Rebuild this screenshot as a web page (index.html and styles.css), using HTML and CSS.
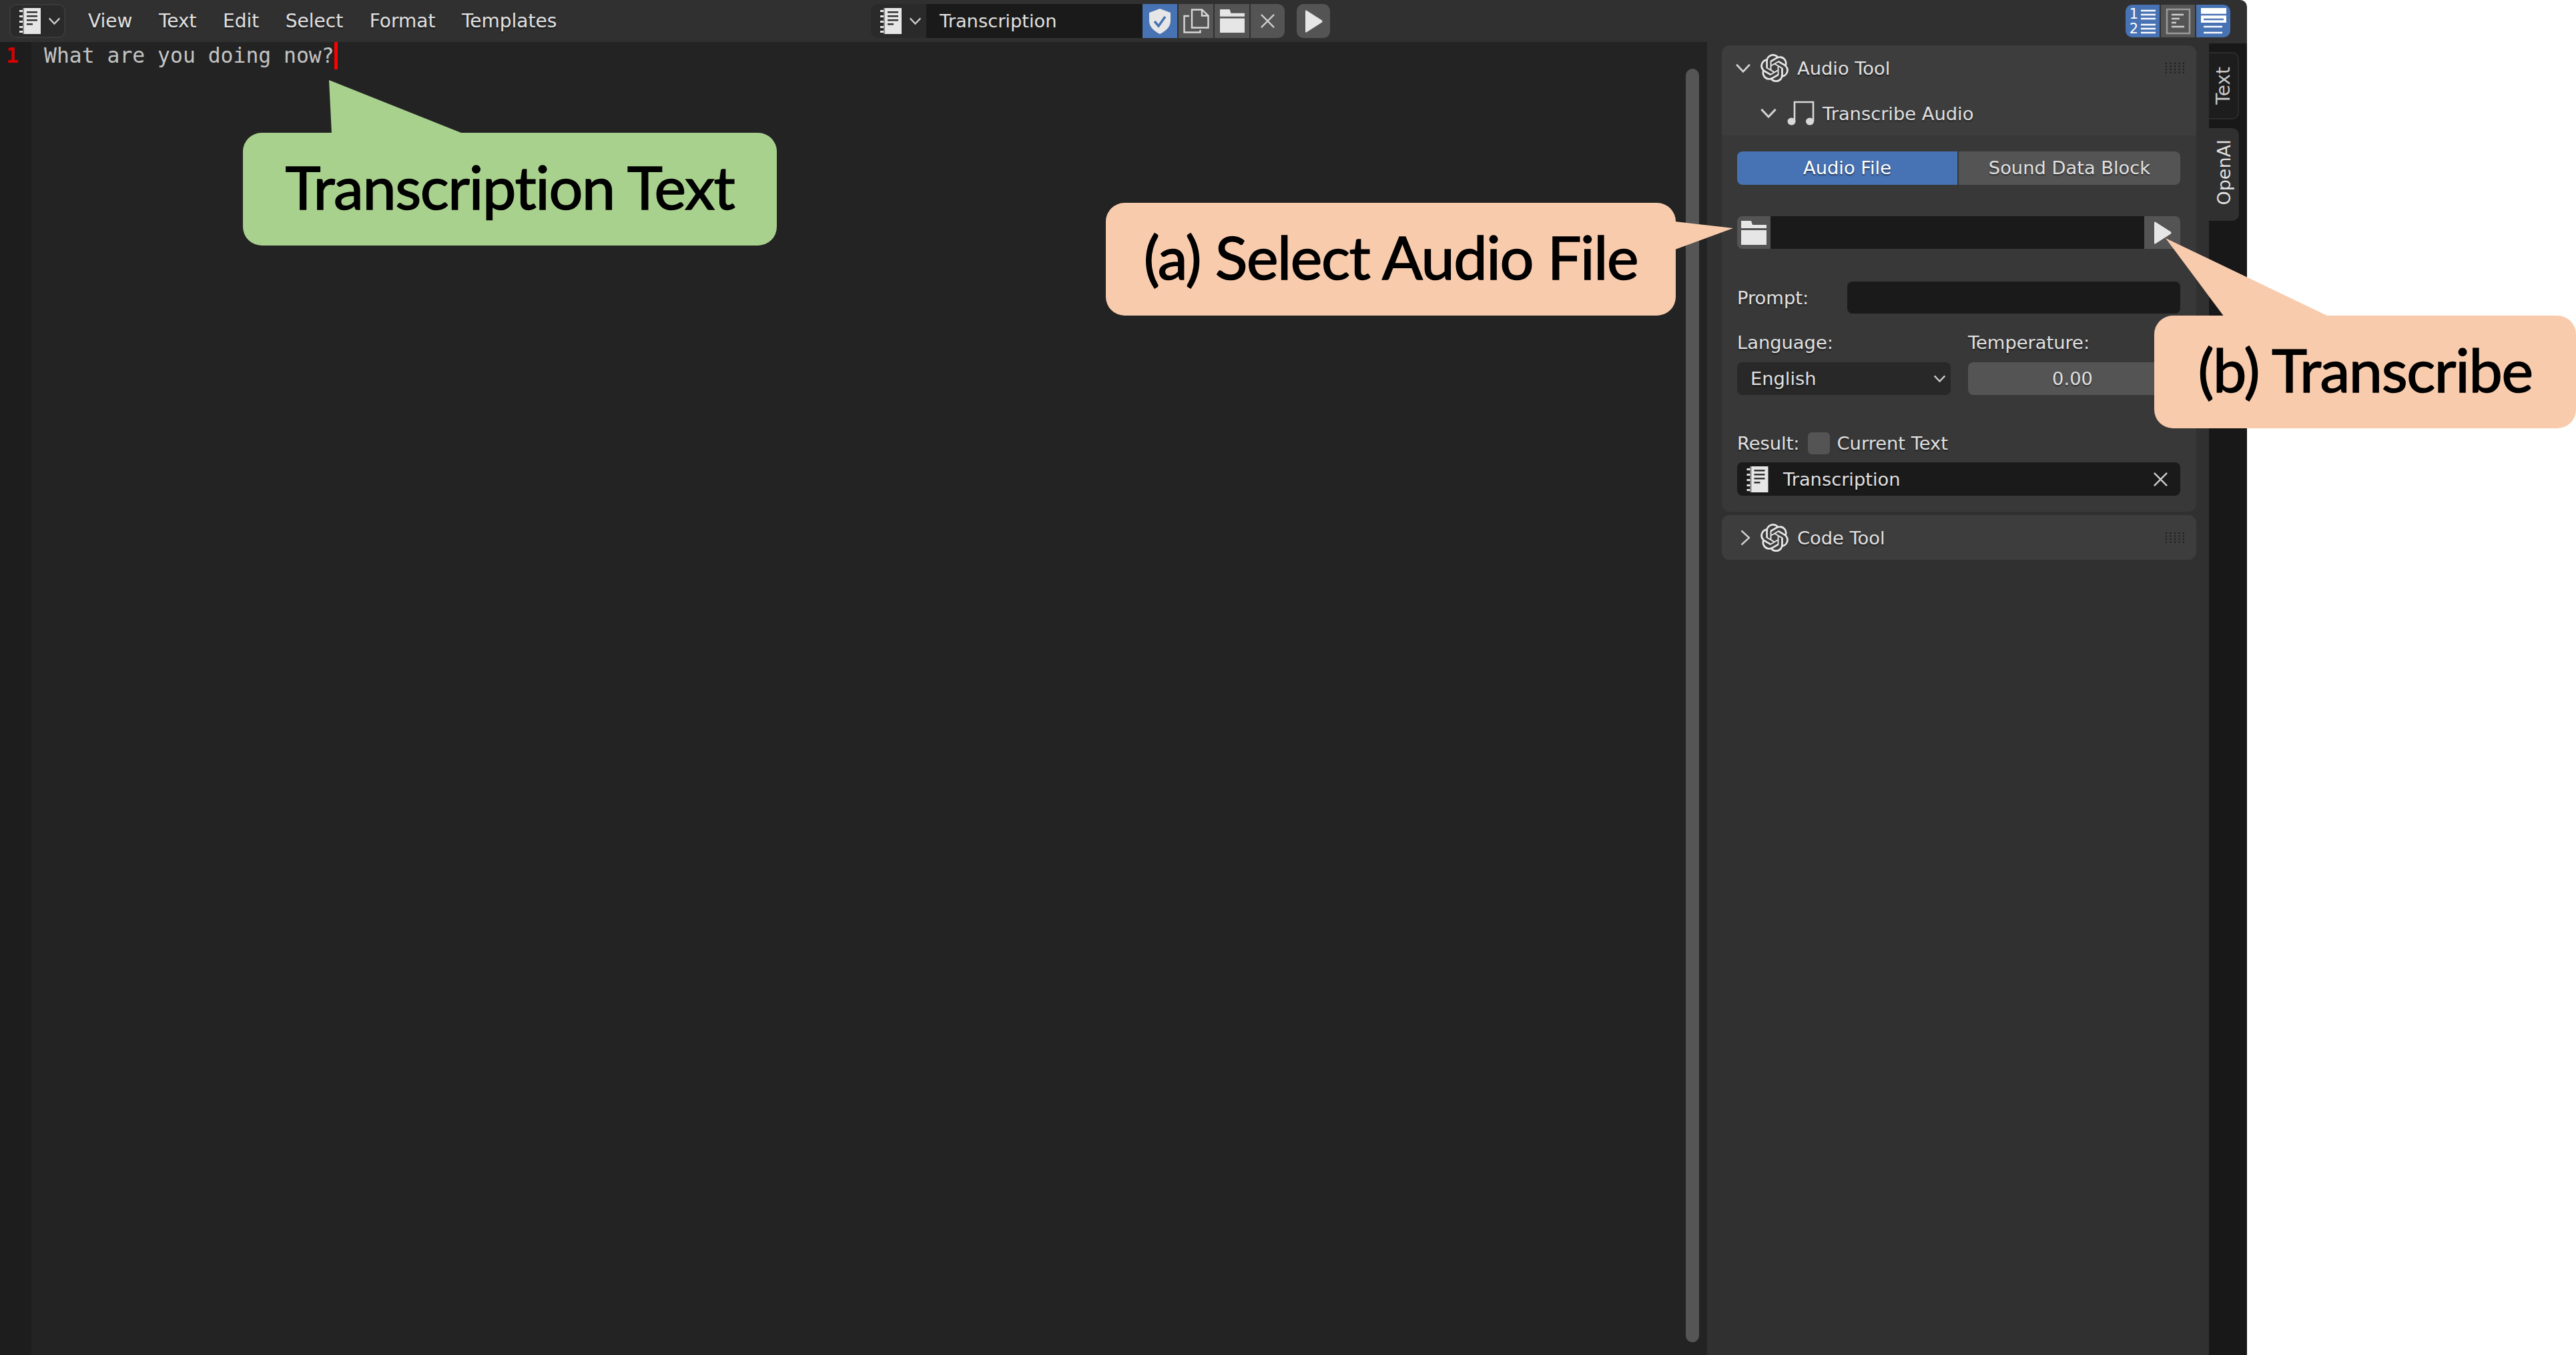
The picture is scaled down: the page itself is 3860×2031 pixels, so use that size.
FILE: index.html
```html
<!DOCTYPE html>
<html lang="en">

<head>
    <meta charset="UTF-8">
    <link rel="stylesheet" href="styles.css">

    <title>Text Editor</title>
</head>

<body>
    <!-- icons used more than once -->
    <svg class="defs">
        <symbol id="i-text" viewBox="0 0 32 39">
            <path fill="#e6e6e6" d="M5 0h27v39H5z"/>
            <path fill="#e6e6e6" d="M0 3h5v3H0zM0 11h5v3H0zM0 19h5v3H0zM0 27h5v3H0zM0 34h5v3H0z"/>
            <path fill="#303030" d="M11 5h16v2.500H11zM11 11h16v2.500H11zM11 17h16v2.500H11zM11 23h9v2.500H11z"/>
            <path fill="#303030" d="M5 0h2v39H5z" opacity=".5"/>
        </symbol>
        <symbol id="i-openai" viewBox="0 0 24 24">
            <path fill="#e6e6e6" d="M22.2819 9.8211a5.9847 5.9847 0 0 0-.5157-4.9108 6.0462 6.0462 0 0 0-6.5098-2.9A6.0651 6.0651 0 0 0 4.9807 4.1818a5.9847 5.9847 0 0 0-3.9977 2.9 6.0462 6.0462 0 0 0 .7427 7.0966 5.98 5.98 0 0 0 .511 4.9107 6.051 6.051 0 0 0 6.5146 2.9001A5.9847 5.9847 0 0 0 13.2599 24a6.0557 6.0557 0 0 0 5.7718-4.2058 5.9894 5.9894 0 0 0 3.9977-2.9001 6.0557 6.0557 0 0 0-.7475-7.0729zm-9.022 12.6081a4.4755 4.4755 0 0 1-2.8764-1.0408l.1419-.0804 4.7783-2.7582a.7948.7948 0 0 0 .3927-.6813v-6.7369l2.02 1.1686a.071.071 0 0 1 .038.052v5.5826a4.504 4.504 0 0 1-4.4945 4.4944zm-9.6607-4.1254a4.4708 4.4708 0 0 1-.5346-3.0137l.142.0852 4.783 2.7582a.7712.7712 0 0 0 .7806 0l5.8428-3.3685v2.3324a.0804.0804 0 0 1-.0332.0615L9.74 19.9502a4.4992 4.4992 0 0 1-6.1408-1.6464zM2.3408 7.8956a4.485 4.485 0 0 1 2.3655-1.9728V11.6a.7664.7664 0 0 0 .3879.6765l5.8144 3.3543-2.0201 1.1685a.0757.0757 0 0 1-.071 0l-4.8303-2.7865A4.504 4.504 0 0 1 2.3408 7.872zm16.5963 3.8558L13.1038 8.364 15.1192 7.2a.0757.0757 0 0 1 .071 0l4.8303 2.7913a4.4944 4.4944 0 0 1-.6765 8.1042v-5.6772a.79.79 0 0 0-.407-.667zm2.0107-3.0231l-.142-.0852-4.7735-2.7818a.7759.7759 0 0 0-.7854 0L9.409 9.2297V6.8974a.0662.0662 0 0 1 .0284-.0615l4.8303-2.7866a4.4992 4.4992 0 0 1 6.6802 4.66zM8.3065 12.863l-2.02-1.1638a.0804.0804 0 0 1-.038-.0567V6.0742a4.4992 4.4992 0 0 1 7.3757-3.4537l-.142.0805L8.704 5.459a.7948.7948 0 0 0-.3927.6813zm1.0976-2.3654l2.602-1.4998 2.6069 1.4998v2.9994l-2.5974 1.4997-2.6067-1.4997Z"/>
        </symbol>
        <symbol id="i-folder" viewBox="0 0 38 36">
            <path fill="#e6e6e6" d="M0 0h15l2 6h21v5H0zM0 14h38v22H0z"/>
        </symbol>
        <symbol id="i-play" viewBox="0 0 27 34">
            <path fill="#e6e6e6" d="M1 1.500Q1 0 2.500 .6L26 15.500Q27 17 26 18.500L2.500 33.400Q1 34 1 32.500z"/>
        </symbol>
        <symbol id="i-x" viewBox="0 0 24 24">
            <path fill="none" stroke="#d0d0d0" stroke-width="2.400" d="M2 2l20 20M22 2L2 22"/>
        </symbol>
        <symbol id="i-down" viewBox="0 0 20 12">
            <path fill="none" stroke="#d0d0d0" stroke-width="2.400" d="M1.500 1.500L10 10.500l8.500-9"/>
        </symbol>
        <symbol id="i-grip" viewBox="0 0 29 16">
            <path fill="#1a1a1a" d="M0 0h2v2H0zM6.500 0h2v2h-2zM13 0h2v2h-2zM19.500 0h2v2h-2zM26 0h2v2h-2z"/>
            <path fill="#1a1a1a" d="M0 4.500h2v2H0zM6.500 4.500h2v2h-2zM13 4.500h2v2h-2zM19.500 4.500h2v2h-2zM26 4.500h2v2h-2z"/>
            <path fill="#1a1a1a" d="M0 9h2v2H0zM6.500 9h2v2h-2zM13 9h2v2h-2zM19.500 9h2v2h-2zM26 9h2v2h-2z"/>
            <path fill="#1a1a1a" d="M0 13.500h2v2H0zM6.500 13.500h2v2h-2zM13 13.500h2v2h-2zM19.500 13.500h2v2h-2zM26 13.500h2v2h-2z"/>
        </symbol>
    </svg>

    <div class="app">
        <div class="header">
            <div class="header-left">
                <div class="editor-type first">
                    <svg class="icon-text"><use href="#i-text"/></svg>
                    <svg class="chev"><use href="#i-down"/></svg>
                </div>
                <div class="menu">
                    <span>View</span>
                    <span>Text</span>
                    <span>Edit</span>
                    <span>Select</span>
                    <span>Format</span>
                    <span>Templates</span>
                </div>
            </div>
            <div class="text-group">
                <div class="editor-type">
                    <svg class="icon-text"><use href="#i-text"/></svg>
                    <svg class="chev"><use href="#i-down"/></svg>
                </div>
                <div class="name-field">Transcription</div>
                <div class="hbtn blue">
                    <svg width="38" height="38" viewBox="0 0 38 38">
                        <path fill="#e6e6e6" d="M19 0l16 6v12c0 10-8 16-16 20C11 34 3 28 3 18V6z"/>
                        <path fill="none" stroke="#4772b3" stroke-width="3.500" d="M11 19l6 7 10-14"/>
                    </svg>
                </div>
                <div class="hbtn">
                    <svg width="39" height="37" viewBox="0 0 39 37">
                        <path fill="none" stroke="#d8d8d8" stroke-width="2.400" d="M13 28.500V1.500h15l9.500 9v18zM28 1.500v9h9.500"/>
                        <path fill="none" stroke="#d8d8d8" stroke-width="2.400" d="M9 11H1.500v24.500h24V32"/>
                    </svg>
                </div>
                <div class="hbtn">
                    <svg width="37" height="35"><use href="#i-folder"/></svg>
                </div>
                <div class="hbtn last">
                    <svg width="23" height="23"><use href="#i-x"/></svg>
                </div>
            </div>
            <div class="run-btn">
                <svg width="27" height="34"><use href="#i-play"/></svg>
            </div>
            <div class="view-group">
                <div class="vbtn blue">
                    <div class="line-nums">
                        <span>1</span>
                        <span>2</span>
                    </div>
                    <svg width="22" height="40" viewBox="0 0 22 40">
                        <path stroke="#fff" stroke-width="2.500" d="M0 4h22M0 10h22M0 16h22M0 25h22M0 31h22M0 37h22"/>
                    </svg>
                </div>
                <div class="vbtn">
                    <svg width="40" height="40" viewBox="0 0 40 40">
                        <path fill="none" stroke="#9a9a9a" stroke-width="2.500" d="M3 2h34v36H3z"/>
                        <path stroke="#d0d0d0" stroke-width="2.500" d="M10 10h18M10 16h12M10 22h7M10 28h19"/>
                    </svg>
                </div>
                <div class="vbtn blue">
                    <svg width="40" height="40" viewBox="0 0 40 40">
                        <path fill="#fff" d="M1 0h38v22H1z"/>
                        <path stroke="#4772b3" stroke-width="2.500" d="M1 10h38"/>
                        <path stroke="#4772b3" stroke-width="2.500" d="M5 17h30"/>
                        <path stroke="#fff" stroke-width="2.500" d="M5 28h28M5 37h28"/>
                    </svg>
                </div>
            </div>
        </div>

        <div class="main">
            <div class="editor">
                <div class="gutter">1</div>
                <div class="text-area">
                    <span class="code">What are you doing now?</span><span class="caret"></span>
                </div>
                <div class="scroll"><div class="thumb"></div></div>
            </div>

            <div class="sidebar">
                <div class="panel">
                    <div class="panel-head">
                        <svg class="chev-lg"><use href="#i-down"/></svg>
                        <svg class="logo"><use href="#i-openai"/></svg>
                        <span class="panel-title">Audio Tool</span>
                        <svg class="grip"><use href="#i-grip"/></svg>
                    </div>
                    <div class="sub-head">
                        <svg class="chev-sub"><use href="#i-down"/></svg>
                        <svg class="note" viewBox="0 0 41 37">
                            <path fill="none" stroke="#d8d8d8" stroke-width="2.600" d="M11 31V2h28v29"/>
                            <ellipse fill="#d8d8d8" cx="6.500" cy="31" rx="6" ry="5.500"/>
                            <ellipse fill="#d8d8d8" cx="34" cy="31" rx="6" ry="5.500"/>
                        </svg>
                        <span class="sub-title">Transcribe Audio</span>
                    </div>
                    <div class="panel-body">
                        <div class="seg">
                            <div class="seg-on">Audio File</div>
                            <div class="seg-off">Sound Data Block</div>
                        </div>
                        <div class="file-row">
                            <div class="file-btn left"><svg width="38" height="36"><use href="#i-folder"/></svg></div>
                            <div class="file-input"></div>
                            <div class="file-btn right"><svg width="27" height="34"><use href="#i-play"/></svg></div>
                        </div>
                        <div class="prompt-row">
                            <span>Prompt:</span>
                            <div class="prompt-input"></div>
                        </div>
                        <div class="two-col">
                            <div>
                                <div class="label">Language:</div>
                                <div class="select">
                                    <span>English</span>
                                    <svg class="chev-sm"><use href="#i-down"/></svg>
                                </div>
                            </div>
                            <div>
                                <div class="label">Temperature:</div>
                                <div class="number">0.00</div>
                            </div>
                        </div>
                        <div class="result-row">
                            <span>Result:</span>
                            <div class="check"></div>
                            <span>Current Text</span>
                        </div>
                        <div class="result-field">
                            <svg class="icon-text-sm"><use href="#i-text"/></svg>
                            <span>Transcription</span>
                            <svg class="clear" width="23" height="23"><use href="#i-x"/></svg>
                        </div>
                    </div>
                </div>
                <div class="panel closed">
                    <div class="panel-head">
                        <svg class="chev-right" viewBox="0 0 15 24">
                            <path fill="none" stroke="#d0d0d0" stroke-width="2.400" d="M1.500 1.500L13 12 1.500 22.500"/>
                        </svg>
                        <svg class="logo"><use href="#i-openai"/></svg>
                        <span class="panel-title">Code Tool</span>
                        <svg class="grip"><use href="#i-grip"/></svg>
                    </div>
                </div>
            </div>

            <div class="tabs">
                <div class="tab tab-text"><span>Text</span></div>
                <div class="tab tab-openai"><span>OpenAI</span></div>
            </div>
        </div>
    </div>

    <!-- annotations on top of the screenshot -->
    <svg class="tails" width="3860" height="2031">
        <polygon class="green" points="493,120 497,201 696,201"/>
        <polygon class="orange" points="2510,332 2597,342 2510,374"/>
        <polygon class="orange" points="3245,357 3333,475 3491,475"/>
    </svg>
    <div class="callout callout-text"><span>Transcription Text</span></div>
    <div class="callout callout-file"><span>(a) Select Audio File</span></div>
    <div class="callout callout-run"><span>(b) Transcribe</span></div>
</body>

</html>
```

FILE: styles.css
```css
@charset "UTF-8";

/* ========BASIC======== */
html,
body {
    margin: 0;
    padding: 0;
    height: 2031px;
    overflow: hidden;
    background: #fff;
}

body {
    position: relative;
    font-family: "DejaVu Sans", sans-serif;
    font-size: 27.300px;
    color: #e0e0e0;
}

svg {
    display: block;
    flex: none;
}

.defs {
    display: none;
}

.app {
    display: flex;
    flex-direction: column;
    width: 3367px;
    height: 2031px;
    background: #303030;
    border-top-right-radius: 10px;
}


/* ========HEADER======== */
.header {
    display: flex;
    align-items: center;
    height: 63px;
    flex: none;
}

.header-left {
    display: flex;
    align-items: center;
    width: 1305px;
    flex: none;
}

.editor-type {
    display: flex;
    align-items: center;
    width: 83px;
    height: 51px;
    flex: none;
    box-sizing: border-box;
    padding-left: 14px;
    background: #2a2a2a;
    border-radius: 10px 0 0 10px;
}

.editor-type.first {
    width: 84px;
    margin-left: 14px;
    padding-left: 13px;
    border: 2px solid #3a3a3a;
    border-radius: 10px;
}

.icon-text {
    width: 32px;
    height: 39px;
}

.chev {
    width: 19px;
    height: 11px;
    margin-left: 11px;
}

.menu {
    display: flex;
    gap: 39.500px;
    margin-left: 34px;
    font-size: 28px;
    text-shadow: 0 2px 2px rgba(0, 0, 0, .5);
}

.text-group {
    display: flex;
    height: 51px;
}

.name-field {
    display: flex;
    align-items: center;
    width: 324px;
    box-sizing: border-box;
    padding-left: 20px;
    background: #1a1a1a;
}

.hbtn {
    display: flex;
    align-items: center;
    justify-content: center;
    width: 52px;
    margin-right: 2px;
    background: #545454;
}

.hbtn.blue {
    background: #4772b3;
}

.hbtn.last {
    width: 51px;
    margin-right: 0;
    border-radius: 0 10px 10px 0;
}

.run-btn {
    display: flex;
    align-items: center;
    justify-content: center;
    width: 50px;
    height: 51px;
    margin-left: 18px;
    background: #545454;
    border-radius: 10px;
}

.view-group {
    display: flex;
    gap: 2px;
    height: 49px;
    margin-left: auto;
    margin-right: 25px;
}

.vbtn {
    display: flex;
    align-items: center;
    justify-content: center;
    width: 51px;
    background: #545454;
}

.vbtn.blue {
    background: #4772b3;
}

.vbtn:first-child {
    gap: 4px;
    border-radius: 10px 0 0 10px;
}

.vbtn:last-child {
    border-radius: 0 10px 10px 0;
}

.line-nums {
    display: flex;
    flex-direction: column;
    font-size: 21px;
    line-height: 22px;
    color: #fff;
}


/* ========EDITOR======== */
.main {
    display: flex;
    flex: 1;
    min-height: 0;
}

.editor {
    display: flex;
    width: 2558px;
    flex: none;
    background: #232323;
}

.gutter {
    width: 47px;
    flex: none;
    box-sizing: border-box;
    padding-left: 9px;
    font-family: "DejaVu Sans Mono", monospace;
    font-size: 31.500px;
    line-height: 41px;
    font-weight: bold;
    color: #d90000;
    background: #1d1d1d;
}

.text-area {
    display: flex;
    align-items: flex-start;
    flex: 1;
    padding-left: 19px;
}

.code {
    font-family: "DejaVu Sans Mono", monospace;
    font-size: 31.400px;
    line-height: 41px;
    color: #c4c4c4;
    white-space: pre;
}

.caret {
    width: 5px;
    height: 41px;
    background: #f00;
}

.scroll {
    width: 32px;
    flex: none;
}

.thumb {
    width: 20px;
    height: 1909px;
    margin-top: 40px;
    background: #555;
    border-radius: 10px;
}


/* ========SIDEBAR======== */
.sidebar {
    width: 752px;
    flex: none;
    box-sizing: border-box;
    padding: 5px 19px 0 22px;
}

.panel {
    border-radius: 12px;
    background: #383838;
    text-shadow: 0 2px 2px rgba(0, 0, 0, .5);
}

.panel.closed {
    margin-top: 5px;
    background: #3d3d3d;
}

.panel-head {
    display: flex;
    align-items: center;
    height: 68px;
    padding-left: 20px;
    background: #3d3d3d;
    border-radius: 12px 12px 0 0;
}

.closed .panel-head {
    height: 67px;
    padding-left: 28px;
    border-radius: 12px;
}

.closed .panel-title,
.sub-title {
    padding-top: 2px;
}

.chev-lg {
    width: 24px;
    height: 14px;
}

.chev-right {
    width: 15px;
    height: 24px;
    margin-right: 1px;
}

.logo {
    width: 42px;
    height: 42px;
    margin-left: 14px;
}

.panel-title {
    margin-left: 13px;
}

.grip {
    width: 29px;
    height: 16px;
    margin-left: auto;
    margin-right: 17px;
}

.sub-head {
    display: flex;
    align-items: center;
    height: 67px;
    padding-left: 57px;
    background: #3d3d3d;
}

.chev-sub {
    width: 26px;
    height: 15px;
}

.note {
    width: 41px;
    height: 37px;
    margin-left: 15px;
}

.sub-title {
    margin-left: 12px;
}

.panel-body {
    padding: 24px 24px 24px 23px;
    border-radius: 0 0 12px 12px;
}

.seg {
    display: flex;
    height: 50px;
    text-align: center;
    line-height: 50px;
    border-radius: 8px;
    overflow: hidden;
}

.seg-on {
    width: 330px;
    background: #4772b3;
    color: #fff;
}

.seg-off {
    flex: 1;
    margin-left: 2px;
    background: #545454;
}

.file-row {
    display: flex;
    height: 49px;
    margin-top: 47px;
}

.file-btn {
    display: flex;
    align-items: center;
    justify-content: center;
    width: 50px;
    background: #545454;
}

.file-btn.left {
    border-radius: 8px 0 0 8px;
}

.file-btn.right {
    width: 54px;
    border-radius: 0 8px 8px 0;
}

.file-input {
    flex: 1;
    background: #1a1a1a;
}

.prompt-row {
    display: flex;
    align-items: center;
    height: 48px;
    margin-top: 49px;
}

.prompt-input {
    width: 499px;
    height: 48px;
    margin-left: auto;
    background: #1a1a1a;
    border-radius: 8px;
}

.two-col {
    display: grid;
    grid-template-columns: 320px 318px;
    column-gap: 26px;
    margin-top: 27px;
}

.label {
    height: 34px;
    margin-bottom: 12px;
    line-height: 34px;
}

.select {
    display: flex;
    align-items: center;
    justify-content: space-between;
    height: 49px;
    padding: 0 7px 0 20px;
    background: #282828;
    border-radius: 8px;
}

.chev-sm {
    width: 19px;
    height: 11px;
}

.number {
    height: 49px;
    padding-right: 5px;
    line-height: 49px;
    text-align: center;
    background: #545454;
    border-radius: 8px;
}

.result-row {
    display: flex;
    align-items: center;
    height: 33px;
    margin-top: 56px;
}

.check {
    width: 33px;
    height: 33px;
    margin: 0 11px 0 12px;
    background: #545454;
    border-radius: 6px;
}

.result-field {
    display: flex;
    align-items: center;
    height: 50px;
    margin-top: 12px;
    padding-left: 14px;
    background: #1a1a1a;
    border-radius: 8px;
}

.icon-text-sm {
    width: 33px;
    height: 39px;
    margin-right: 22px;
}

.clear {
    margin-left: auto;
    margin-right: 18px;
}


/* ========TABS======== */
.tabs {
    flex: 1;
    padding-top: 13px;
    background: #181818;
    border-top: 2px solid #303030;
}

.tab {
    display: flex;
    align-items: center;
    justify-content: center;
    width: 45px;
    box-sizing: border-box;
    border-radius: 0 10px 10px 0;
}

.tab span {
    writing-mode: vertical-rl;
    transform: rotate(180deg);
}

.tab-text {
    height: 101px;
    font-size: 28px;
    background: #1d1d1d;
    border: 2px solid #2c2c2c;
    border-left: 0;
    color: #c8c8c8;
}

.tab-openai {
    height: 139px;
    margin-top: 13px;
    padding-bottom: 6px;
    font-size: 27px;
    background: #303030;
}


/* ========CALLOUTS======== */
.tails {
    position: absolute;
    left: 0;
    top: 0;
}

.green {
    fill: #a9d18e;
}

.orange {
    fill: #f8cbad;
}

.callout {
    position: absolute;
    display: flex;
    align-items: center;
    justify-content: center;
    height: 169px;
    border-radius: 28px;
    font-family: "Lato", sans-serif;
    font-size: 90px;
    font-weight: 400;
    font-variant-ligatures: none;
    letter-spacing: -1.400px;
    -webkit-text-stroke: 1.500px #000;
    color: #000;
}

.callout span {
    margin-bottom: 10px;
}

.callout-text {
    left: 364px;
    top: 199px;
    width: 800px;
    background: #a9d18e;
}

.callout-file {
    left: 1657px;
    top: 304px;
    width: 854px;
    background: #f8cbad;
}

.callout-run {
    left: 3228px;
    top: 473px;
    width: 632px;
    background: #f8cbad;
}
```
